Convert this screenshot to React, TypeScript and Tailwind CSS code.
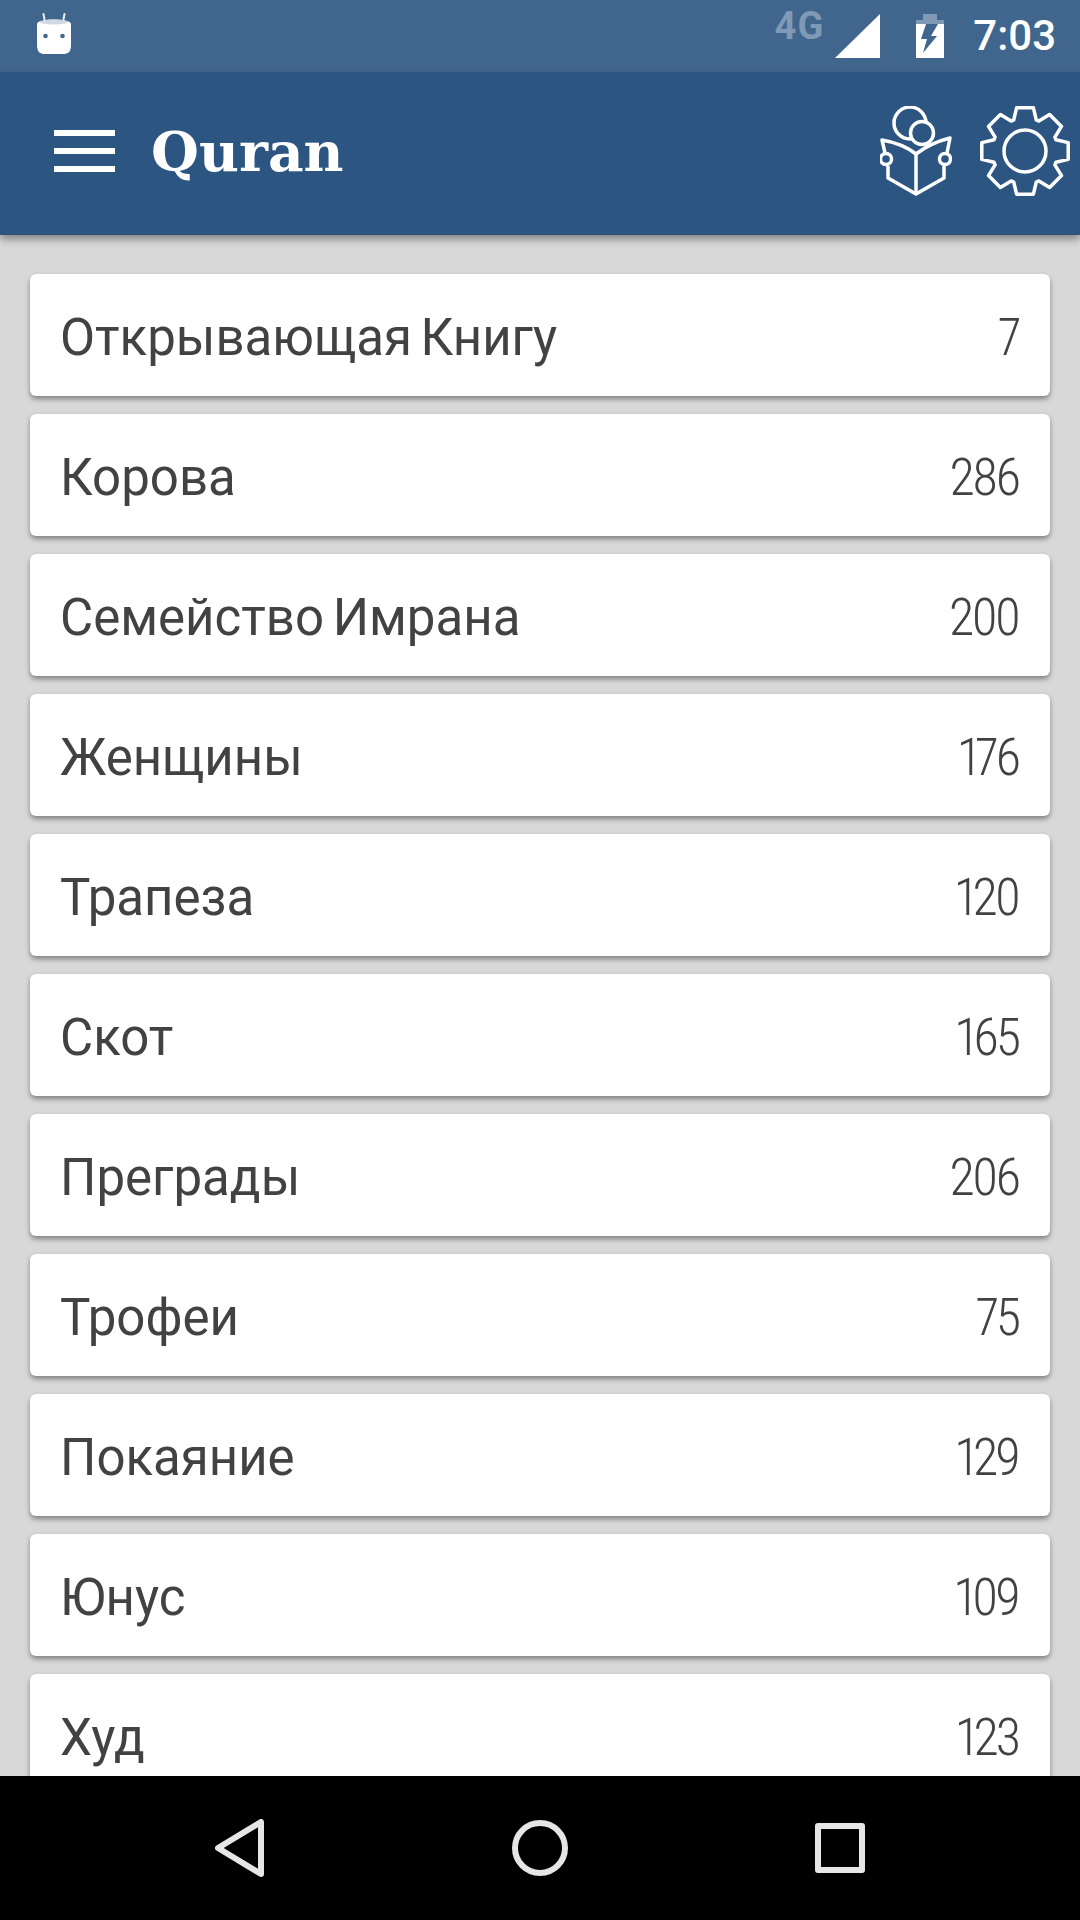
const suras: [string, number][] = [
  ["Открывающая Книгу", 7],
  ["Корова", 286],
  ["Семейство Имрана", 200],
  ["Женщины", 176],
  ["Трапеза", 120],
  ["Скот", 165],
  ["Преграды", 206],
  ["Трофеи", 75],
  ["Покаяние", 129],
  ["Юнус", 109],
  ["Худ", 123],
];

// 8 teeth, flared at the root
const gearPath = Array.from({ length: 8 }, (_, i) => {
  const a = (i * Math.PI) / 4 - Math.PI / 2;
  const pt = (angle: number, r: number) =>
    `${(46 + r * Math.cos(angle)).toFixed(1)} ${(46 + r * Math.sin(angle)).toFixed(1)}`;
  const root = (20 * Math.PI) / 180;
  const tip = (11 * Math.PI) / 180;
  return `${i === 0 ? "M" : "L"}${pt(a - root, 33)}L${pt(a - tip, 44)}L${pt(a + tip, 44)}L${pt(a + root, 33)}`;
}).join("") + "Z";

function StatusBar() {
  return (
    <div className="flex h-[72px] shrink-0 items-center bg-[#41668e] pl-[36px] pr-[24px]">
      <svg width="36" height="42" viewBox="0 0 36 42" className="mb-[4px]">
        <path d="M9 9 7.500 1M27 9l1.500-8" stroke="#e8edf2" strokeWidth="2" strokeLinecap="round" />
        <path d="M1 11c0-6 34-6 34 0v21c0 7-3 9-8 9H9c-5 0-8-2-8-9z" fill="#fff" />
        <ellipse cx="18" cy="9" rx="14" ry="2.500" fill="#cfd9e3" />
        <circle cx="9.500" cy="23" r="2.300" fill="#41668e" />
        <circle cx="26.500" cy="23" r="2.300" fill="#41668e" />
      </svg>
      <div className="flex-1" />
      <span className="mb-[20px] mr-[11px] font-['Roboto',sans-serif] text-[38px] font-bold leading-none tracking-[1px] text-[#8099b4]">
        4G
      </span>
      <svg width="46" height="45" viewBox="0 0 46 45" className="mr-[34px]">
        <path d="M0 44 45 0v44z" fill="#fff" />
      </svg>
      <svg width="30" height="44" viewBox="0 0 30 44" className="mr-[28px]">
        <path d="M8 0h14v6H8z" fill="#8099b4" />
        <path d="M1 6h28v38H1z" fill="#fff" />
        <path d="M1 6h28v4H1z" fill="#8099b4" />
        <path d="M11 10h12l-7 12h6L8 39l4-14H6z" fill="#41668e" />
      </svg>
      <span className="font-['Roboto',sans-serif] text-[42px] font-medium leading-none text-white">7:03</span>
    </div>
  );
}

function ReaderIcon() {
  return (
    <svg width="72" height="90" viewBox="0 0 72 90" fill="none" stroke="#fff" strokeWidth="3.500" strokeLinejoin="round">
      <circle cx="30" cy="17" r="16" />
      <circle cx="42" cy="27" r="11.500" fill="#2c5581" />
      <path d="M36 88V48C27 41 14 36 2 34l3 13M36 48c9-7 22-13 34-16l-3 15M8 60v12l28 16 28-16V60" fill="#2c5581" />
      <circle cx="6" cy="53" r="5.500" fill="#2c5581" />
      <circle cx="65" cy="53" r="5.500" fill="#2c5581" />
    </svg>
  );
}

function GearIcon() {
  return (
    <svg width="92" height="92" viewBox="0 0 92 92" fill="none" stroke="#fff" strokeWidth="3.500" strokeLinejoin="round">
      <path d={gearPath} />
      <circle cx="46" cy="46" r="21" />
    </svg>
  );
}

function AppBar() {
  return (
    <div className="z-10 flex h-[163px] shrink-0 items-center bg-[#2c5581] pr-[9px] shadow-[0_4px_8px_rgba(0,0,0,0.4)]">
      <div className="mb-[5px] ml-[54px] flex w-[61px] flex-col gap-[12px]">
        <div className="h-[6px] bg-white" />
        <div className="h-[6px] bg-white" />
        <div className="h-[6px] bg-white" />
      </div>
      <span className="mb-[5px] ml-[36px] font-['DejaVu_Serif',serif] text-[55px] font-bold leading-none text-white">
        Quran
      </span>
      <div className="flex-1" />
      <div className="mb-[5px] mr-[27px]">
        <ReaderIcon />
      </div>
      <div className="mb-[5px]">
        <GearIcon />
      </div>
    </div>
  );
}

function NavBar() {
  return (
    <div className="z-10 flex h-[144px] shrink-0 items-center bg-black pl-[215px] pr-[215px]">
      <svg width="50" height="58" viewBox="0 0 50 58">
        <path d="M46 3v52L3 29z" fill="none" stroke="#e6e6e6" strokeWidth="6" strokeLinejoin="round" />
      </svg>
      <div className="flex-1" />
      <div className="h-[56px] w-[56px] rounded-full border-[6px] border-[#e6e6e6]" />
      <div className="flex-1" />
      <div className="h-[50px] w-[50px] rounded-[3px] border-[6px] border-[#e6e6e6]" />
    </div>
  );
}

export default function App() {
  return (
    <div className="flex h-[1920px] w-[1080px] flex-col overflow-hidden bg-[#d8d8d8]">
      <StatusBar />
      <AppBar />
      <div className="flex min-h-0 flex-1 flex-col gap-[18px] overflow-hidden px-[30px] pt-[39px]">
        {suras.map(([name, count]) => (
          <div
            key={name}
            className="flex h-[122px] shrink-0 items-center justify-between rounded-[6px] bg-white pl-[30px] pr-[32px] pt-[5px] shadow-[0_3px_5px_rgba(0,0,0,0.4)]"
          >
            <span className="font-['Roboto',sans-serif] text-[51px] leading-none text-[#424242] [word-spacing:-4px]">
              {name}
            </span>
            <span className="font-['Roboto',sans-serif] text-[52px] font-light leading-none tracking-[-3px] text-[#424242] proportional-nums [font-stretch:75%]">
              {count}
            </span>
          </div>
        ))}
      </div>
      <NavBar />
    </div>
  );
}
